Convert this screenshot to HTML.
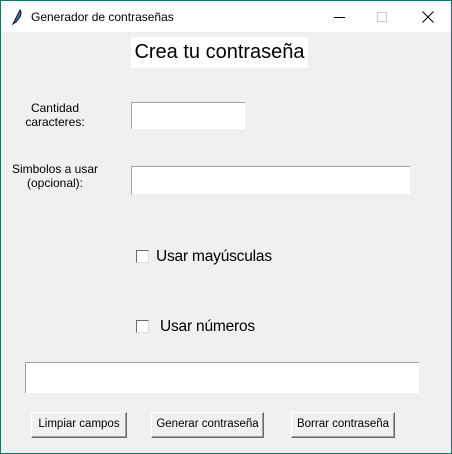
<!DOCTYPE html>
<html><head><style>
*{margin:0;padding:0;box-sizing:border-box}
body{width:452px;height:454px;background:#0b7a6c;position:relative;overflow:hidden;font-family:"Liberation Sans",sans-serif}
#win{position:absolute;left:1px;top:1px;width:450px;height:452px;background:#f0f0f0}
#tb{position:absolute;left:0;top:0;width:450px;height:31px;background:#fff;font-size:12px;color:#000}
.a{position:absolute}
.ent{position:absolute;background:#fff;border-top:1px solid #a0a0a0;border-left:1px solid #a0a0a0}
.lbl{position:absolute;font-size:12px;text-align:center;line-height:14px;color:#000}
.cb{position:absolute;width:13px;height:13px;background:#fff;border:1px solid #6a6a6a;border-right-color:#ddd;border-bottom-color:#ddd}
.ct{position:absolute;font-size:15.5px;color:#000;letter-spacing:-0.2px}
.btn{position:absolute;height:26px;background:#f0f0f0;border:1px solid;border-color:#fff #6a6a6a #6a6a6a #fff;box-shadow:inset -1px -1px #a0a0a0;font-size:11.5px;text-align:center;line-height:23px}
</style></head><body>
<div id="win">
<div id="tb">
<svg class="a" style="left:11px;top:8px" width="10" height="16" viewBox="0 0 10 16"><path d="M1 15 L8 1 Q10 3 8 8 L4 13 Z" fill="#4a78b0" stroke="#111" stroke-width="1"/></svg>
<div class="a" style="left:30px;top:9px">Generador de contraseñas</div>
<div class="a" style="left:333px;top:16px;width:11px;height:1px;background:#000"></div>
<div class="a" style="left:376px;top:11px;width:10px;height:10px;border:1px solid #ccc"></div>
<svg class="a" style="left:421px;top:10px" width="12" height="12"><path d="M0.5 0.5L11.5 11.5M11.5 0.5L0.5 11.5" stroke="#000" stroke-width="1"/></svg>
</div>
<div class="a" style="left:130px;top:36px;width:177px;height:31px;background:#fff;font-size:20px;line-height:31px;text-align:center">Crea tu contraseña</div>
<div class="lbl" style="left:4px;top:100px;width:100px">Cantidad<br>caracteres:</div>
<div class="ent" style="left:130px;top:101px;width:114px;height:27px"></div>
<div class="lbl" style="left:4px;top:161px;width:100px">Simbolos a usar<br>(opcional):</div>
<div class="ent" style="left:130px;top:165px;width:279px;height:28px"></div>
<div class="cb" style="left:135px;top:249px"></div>
<div class="ct" style="left:155px;top:247px">Usar mayúsculas</div>
<div class="cb" style="left:135px;top:319px"></div>
<div class="ct" style="left:159px;top:317px">Usar números</div>
<div class="ent" style="left:24px;top:361px;width:394px;height:31px"></div>
<div class="btn" style="left:30px;top:411px;width:96px">Limpiar campos</div>
<div class="btn" style="left:150px;top:411px;width:113px">Generar contraseña</div>
<div class="btn" style="left:290px;top:411px;width:104px">Borrar contraseña</div>
</div>
</body></html>
